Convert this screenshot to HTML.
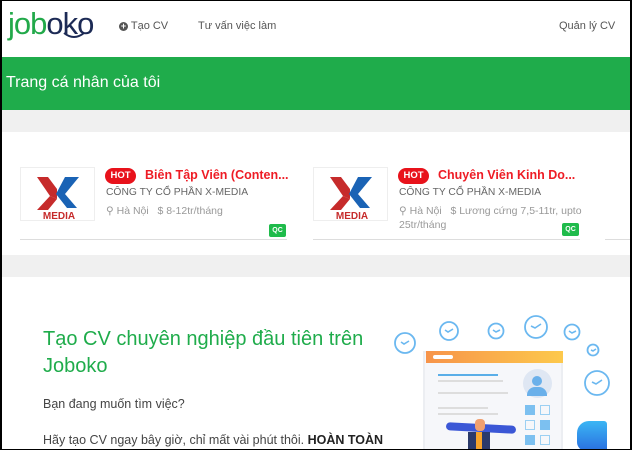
<!DOCTYPE html>
<html><head><meta charset="utf-8"><style>
*{margin:0;padding:0;box-sizing:border-box}
body{width:632px;height:450px;overflow:hidden;background:#000;font-family:"Liberation Sans",Arial,sans-serif;position:relative}
#pg{position:absolute;left:2px;top:1px;width:628px;height:448px;background:#fff;overflow:hidden}
.a{position:absolute;white-space:nowrap}
.nav{font-size:11px;color:#555}
.green{background:#1fac4b}
.gray{background:#f0f0f0}
.logo{position:absolute;width:75px;height:54px;border:1px solid #eee;background:#fff}
.hot{position:absolute;background:#e8121b;color:#fff;font-size:9.5px;font-weight:bold;border-radius:8px;width:31px;height:16px;line-height:16px;text-align:center}
.tt{font-size:12.5px;font-weight:bold;color:#ee1c25}
.co{font-size:10.3px;color:#666}
.lo{font-size:10.5px;color:#999}
.qc{position:absolute;background:#1fbb4b;color:#fff;font-size:7px;font-weight:bold;width:17px;height:13px;line-height:13px;text-align:center;border-radius:2px}
.sep{position:absolute;height:1px;background:#ddd}
.ck{position:absolute}
</style></head><body><div id="pg">
<div class="a" style="left:6px;top:5px;font-size:31px;letter-spacing:-1px;line-height:36px"><span style="color:#22a94a">job</span><span style="color:#1c2a55">oko</span></div>
<svg class="a" style="left:60px;top:30px" width="24" height="10"><path d="M2 2 Q12 10 22 2" stroke="#1c2a55" stroke-width="2" fill="none"/></svg>
<div class="a nav" style="left:117px;top:19px"><span style="display:inline-block;width:9px;height:9px;border-radius:50%;background:#555;color:#fff;font-size:9px;line-height:9px;text-align:center;font-weight:bold">+</span> Tạo CV</div>
<div class="a nav" style="left:196px;top:19px">Tư vấn việc làm</div>
<div class="a nav" style="left:557px;top:19px">Quản lý CV</div>
<div class="a green" style="left:0;top:56px;width:628px;height:53px"></div>
<div class="a" style="left:4px;top:73px;font-size:16px;color:#fff">Trang cá nhân của tôi</div>
<div class="a gray" style="left:0;top:109px;width:628px;height:22px"></div>
<div class="a gray" style="left:0;top:254px;width:628px;height:22px"></div>
<div class="logo" style="left:18px;top:166px"><svg width="75" height="54"><polygon points="16,9 27,9 36,21 36,31 29,28 " fill="#c62b2b"/><polygon points="29,28 36,31 27,42 16,42" fill="#c62b2b"/><polygon points="44,9 58,9 44,26 56,40 46,40 35,26" fill="#1a63b5"/><text x="38" y="51" font-size="10" font-weight="bold" fill="#c62b2b" text-anchor="middle" font-family="Liberation Sans">MEDIA</text></svg></div>
<div class="hot" style="left:103px;top:167px">HOT</div>
<div class="a tt" style="left:143px;top:167px">Biên Tập Viên (Conten...</div>
<div class="a co" style="left:104px;top:186px">CÔNG TY CỔ PHẦN X-MEDIA</div>
<div class="a lo" style="left:104px;top:204px">⚲ Hà Nội &nbsp;&nbsp;$ 8-12tr/tháng</div>
<div class="qc" style="left:267px;top:223px">QC</div>
<div class="sep" style="left:18px;top:238px;width:267px"></div>
<div class="logo" style="left:311px;top:166px"><svg width="75" height="54"><polygon points="16,9 27,9 36,21 36,31 29,28 " fill="#c62b2b"/><polygon points="29,28 36,31 27,42 16,42" fill="#c62b2b"/><polygon points="44,9 58,9 44,26 56,40 46,40 35,26" fill="#1a63b5"/><text x="38" y="51" font-size="10" font-weight="bold" fill="#c62b2b" text-anchor="middle" font-family="Liberation Sans">MEDIA</text></svg></div>
<div class="hot" style="left:396px;top:167px">HOT</div>
<div class="a tt" style="left:436px;top:167px">Chuyên Viên Kinh Do...</div>
<div class="a co" style="left:397px;top:186px">CÔNG TY CỔ PHẦN X-MEDIA</div>
<div class="a lo" style="left:397px;top:204px">⚲ Hà Nội &nbsp;&nbsp;$ Lương cứng 7,5-11tr, upto</div>
<div class="a lo" style="left:397px;top:218px">25tr/tháng</div>
<div class="qc" style="left:560px;top:222px">QC</div>
<div class="sep" style="left:311px;top:238px;width:267px"></div>
<div class="sep" style="left:603px;top:238px;width:30px"></div>
<div class="a" style="left:41px;top:325px;font-size:20px;color:#1fac4b;line-height:27px">Tạo CV chuyên nghiệp đầu tiên trên<br>Joboko</div>
<div class="a" style="left:41px;top:396px;font-size:12.5px;color:#444">Bạn đang muốn tìm việc?</div>
<div class="a" style="left:41px;top:432px;font-size:12.5px;color:#444">Hãy tạo CV ngay bây giờ, chỉ mất vài phút thôi. <b style="color:#222">HOÀN TOÀN</b></div>
<svg class="ck" style="left:0;top:0" width="628" height="448">
<g fill="#fff" stroke="#6bb8f0" stroke-width="1.8">
<circle cx="403" cy="342" r="10"/><circle cx="447" cy="330" r="9"/><circle cx="494" cy="330" r="7.5"/><circle cx="534" cy="326" r="11"/><circle cx="570" cy="331" r="7.5"/><circle cx="591" cy="349" r="5.5"/><circle cx="595" cy="382" r="12"/>
</g>
<g fill="none" stroke="#6bb8f0" stroke-width="1.6">
<path d="M399 341l3 2 5-3"/><path d="M443 329l3 2 5-3"/><path d="M491 329l3 2 4-2"/><path d="M529 325l4 2 6-4"/><path d="M567 330l3 2 4-2"/><path d="M589 349l2 1 3-2"/><path d="M590 381l4 2 6-4"/>
</g></svg>
<div class="a" style="left:421px;top:350px;width:140px;height:100px;background:#f6f7fa;border:2px solid #eceef2"></div>
<div class="a" style="left:424px;top:350px;width:137px;height:12px;background:linear-gradient(90deg,#f7944a,#fdc94c)"></div>
<div class="a" style="left:431px;top:354px;width:20px;height:4px;background:#fff;border-radius:2px"></div>
<div class="a" style="left:436px;top:373px;width:60px;height:2px;background:#5aaee8"></div>
<div class="a" style="left:436px;top:379px;width:65px;height:2px;background:#ddd"></div>
<div class="a" style="left:436px;top:391px;width:70px;height:2px;background:#ddd"></div>
<div class="a" style="left:436px;top:406px;width:50px;height:2px;background:#ddd"></div>
<div class="a" style="left:436px;top:412px;width:60px;height:2px;background:#ddd"></div>
<div class="a" style="left:521px;top:368px;width:29px;height:29px;border-radius:50%;background:#dfe7f3"></div>
<div class="a" style="left:530px;top:375px;width:10px;height:10px;border-radius:50%;background:#6ab0ea"></div>
<div class="a" style="left:525px;top:386px;width:20px;height:9px;border-radius:8px 8px 0 0;background:#6ab0ea"></div>
<div class="a" style="left:523px;top:404px;width:10px;height:10px;background:#7cc0f0"></div>
<div class="a" style="left:538px;top:404px;width:10px;height:10px;border:1.5px solid #9cd0f3"></div>
<div class="a" style="left:523px;top:419px;width:10px;height:10px;border:1.5px solid #9cd0f3"></div>
<div class="a" style="left:538px;top:419px;width:10px;height:10px;background:#7cc0f0"></div>
<div class="a" style="left:523px;top:434px;width:10px;height:10px;background:#7cc0f0"></div>
<div class="a" style="left:538px;top:434px;width:10px;height:10px;border:1.5px solid #9cd0f3"></div>
<div class="a" style="left:444px;top:423px;width:70px;height:8px;background:#3b57d6;border-radius:4px;transform:rotate(3deg)"></div>
<div class="a" style="left:473px;top:418px;width:10px;height:12px;background:#f0a070;border-radius:4px"></div>
<div class="a" style="left:466px;top:431px;width:22px;height:20px;background:#2b3a6b"></div>
<div class="a" style="left:474px;top:431px;width:6px;height:20px;background:#f7a32a"></div>
<div class="a" style="left:575px;top:420px;width:30px;height:30px;background:linear-gradient(#3bb6f4,#2a6fe0);border-radius:40% 10% 0 30%"></div>
</div></body></html>
